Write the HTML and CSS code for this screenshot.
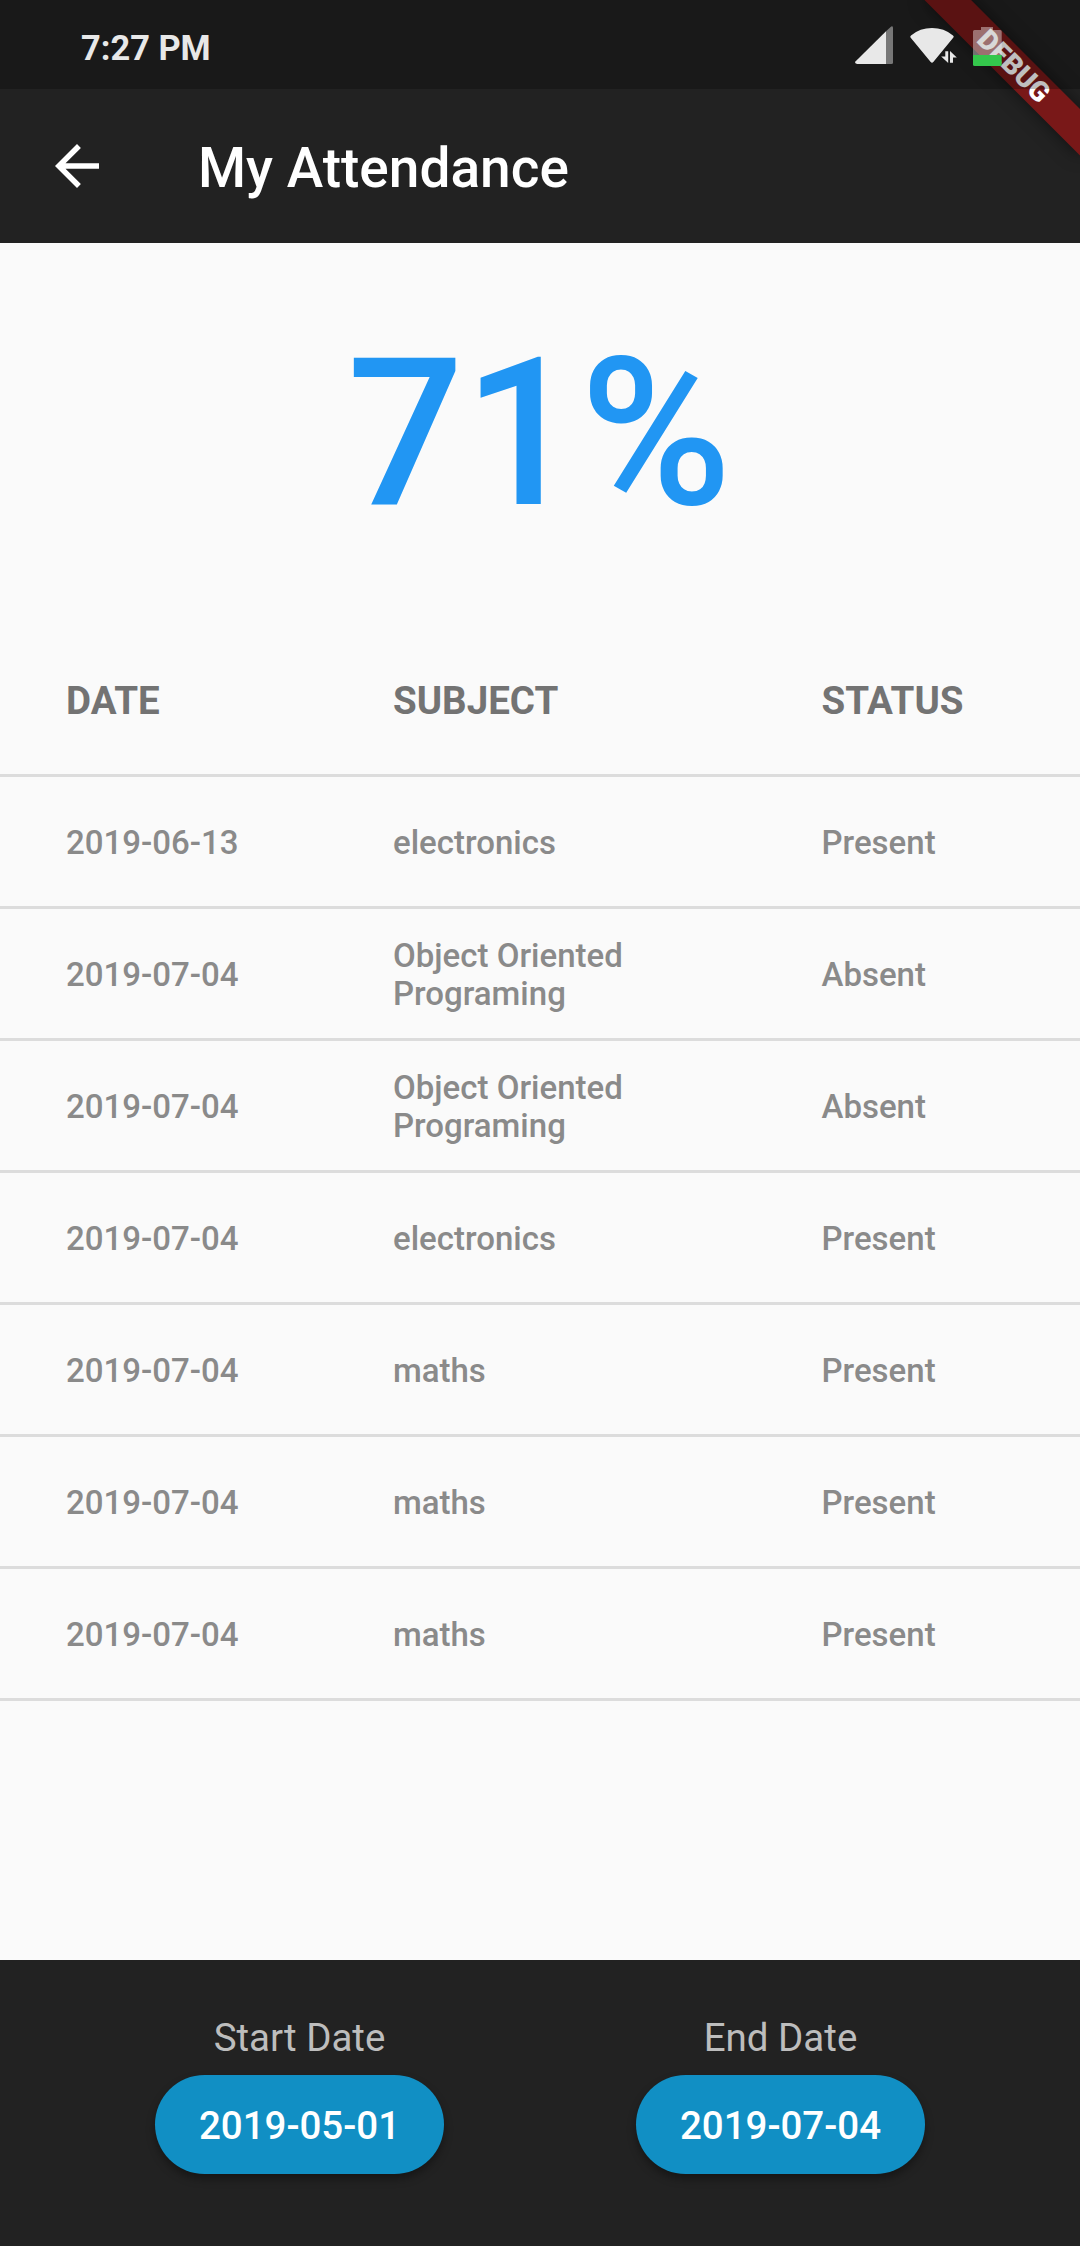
FILE: index.html
```html
<!DOCTYPE html>
<html lang="en">
<head>
<meta charset="utf-8">
<title>My Attendance</title>
<link rel="stylesheet" href="styles.css">
</head>
<body>
<div class="screen">
  <header class="app-bar">
    <svg class="back" viewBox="0 0 24 24" aria-label="Back"><path d="M20 11H7.83l5.59-5.59L12 4l-8 8 8 8 1.41-1.41L7.83 13H20v-2z"/></svg>
    <h1 class="title">My Attendance</h1>
  </header>
  <main class="content">
    <div class="percent">71%</div>
    <table class="attendance">
      <thead>
        <tr><th class="date">DATE</th><th class="subject">SUBJECT</th><th class="status">STATUS</th></tr>
      </thead>
      <tbody>
        <tr><td>2019-06-13</td><td>electronics</td><td>Present</td></tr>
        <tr><td>2019-07-04</td><td>Object Oriented<br>Programing</td><td>Absent</td></tr>
        <tr><td>2019-07-04</td><td>Object Oriented<br>Programing</td><td>Absent</td></tr>
        <tr><td>2019-07-04</td><td>electronics</td><td>Present</td></tr>
        <tr><td>2019-07-04</td><td>maths</td><td>Present</td></tr>
        <tr><td>2019-07-04</td><td>maths</td><td>Present</td></tr>
        <tr><td>2019-07-04</td><td>maths</td><td>Present</td></tr>
      </tbody>
    </table>
  </main>
  <footer class="range">
    <div class="field"><span class="label">Start Date</span><button class="pill">2019-05-01</button></div>
    <div class="field"><span class="label">End Date</span><button class="pill">2019-07-04</button></div>
  </footer>
  <div class="debug">DEBUG</div>
  <div class="status-bar">
    <span class="clock">7:27 PM</span>
    <svg class="tray" viewBox="0 0 160 50">
      <path fill="#777" d="M36 11.3 41.2 6.6Q43 5.5 43 8V42.500Q43 44 41.500 44H36z"/>
      <path fill="#e8e8e8" d="M36 11.300V44H7.200Q4 43.500 5.700 41.300z"/>
      <path fill="#e8e8e8" d="M60.500 17.500Q59.800 16.300 61 15.400Q70 8 82 8Q94 8 103 15.400Q104.300 16.300 103.400 17.500L83.300 42Q82 43.600 80.700 42z"/>
      <path fill="#e8e8e8" stroke="#1a1a1a" stroke-width="1.400" paint-order="stroke" d="M95.300 31.200H98.200V43L91.200 36.500H95.300zM100 31L106.800 37.400H103V42.800H100z"/>
      <path fill="#fff" fill-opacity=".4" d="M123 35V11.500Q123 10 124.500 10H131V7H143V10H150.200Q151.700 10 151.700 11.500V35z"/>
      <path fill="#34c74c" d="M123 35H151.700V44.500Q151.700 46 150.200 46H124.500Q123 46 123 44.500z"/>
    </svg>
  </div>
</div>
</body>
</html>
```
FILE: styles.css
```css
* { box-sizing: border-box; }

body {
  margin: 0;
  font-family: Roboto, sans-serif;
  background: #fafafa;
}

.screen {
  position: relative;
  display: flex;
  flex-direction: column;
  width: 1080px;
  height: 2246px;
  overflow: hidden;
}

.app-bar {
  display: flex;
  align-items: center;
  gap: 88px;
  height: 243px;
  padding: 89px 44px 0;
  background: #222;
  color: #fff;
}

.back { width: 66px; height: 66px; fill: #fff; }

.title { margin: 0; padding-top: 3px; font-size: 55px; font-weight: 500; line-height: 64px; }

.content { flex: 1; }

.percent {
  height: 380px;
  padding: 70px 2px 0 0;
  color: #2196f3;
  font-size: 206px;
  font-weight: 500;
  line-height: 242px;
  letter-spacing: -.6px;
  text-align: center;
}

.attendance {
  width: 100%;
  table-layout: fixed;
  border-collapse: separate;
  border-spacing: 0;
}

.attendance th,
.attendance td {
  height: 132px;
  padding: 2px 0 0 66px;
  border-bottom: 3px solid #dcdcdc;
  text-align: left;
  vertical-align: middle;
  color: #8a8a8a;
  font-size: 33px;
  font-weight: 500;
  line-height: 38px;
}

.attendance th {
  height: 154px;
  padding-top: 4px;
  color: #737373;
  font-size: 38.5px;
  font-weight: 700;
  line-height: 45px;
}

.date { width: 327px; }
.subject { width: 428.5px; }

.range {
  display: flex;
  justify-content: center;
  gap: 192px;
  height: 286px;
  padding-top: 55px;
  background: #222;
}

.field { display: flex; flex-direction: column; align-items: center; gap: 15.3px; }

.label { color: #bdbdbd; font-size: 38.5px; line-height: 45px; }

.pill {
  width: 289px;
  height: 99px;
  padding: 1px 0 0;
  border: 0;
  border-radius: 50px;
  background: #118fc4;
  box-shadow: 0 5px 8px rgba(0, 0, 0, .35);
  color: #fff;
  font: 500 38.5px/45px Roboto, sans-serif;
}

/* Corner ribbon, rotated around the top right corner of the screen */
.debug {
  position: absolute;
  top: 77px;
  left: 970px;
  width: 220px;
  height: 33px;
  transform: rotate(45deg);
  transform-origin: 110px -77px;
  background: #791818;
  box-shadow: 0 0 17px rgba(0, 0, 0, .5);
  color: #fff;
  font-size: 28px;
  font-weight: 900;
  line-height: 33px;
  text-align: center;
}

.status-bar {
  position: absolute;
  top: 0;
  left: 0;
  display: flex;
  align-items: center;
  justify-content: space-between;
  width: 100%;
  height: 89px;
  padding: 0 70px 0 81px;
  background: rgba(0, 0, 0, .25);
}

.clock { padding-top: 6px; color: #e8e8e8; font-size: 34.4px; font-weight: 700; line-height: 40px; }

.tray { align-self: flex-start; width: 160px; height: 50px; margin-top: 20px; }
```
